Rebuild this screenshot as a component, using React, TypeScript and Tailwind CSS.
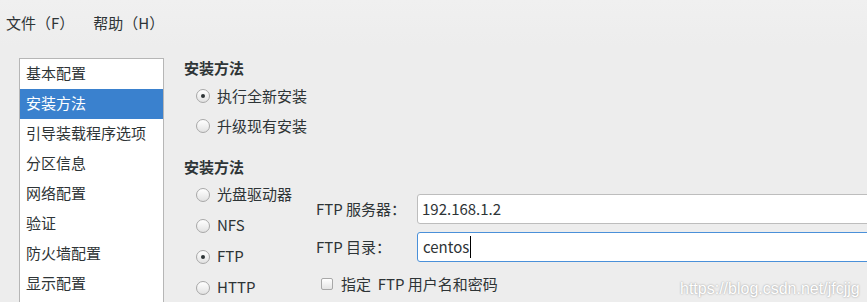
import React from "react";

const font = { fontFamily: '"Noto Sans CJK SC", "DejaVu Sans", sans-serif' };

const Radio: React.FC<{ checked?: boolean }> = ({ checked }) => (
  <span className="w-[14px] h-[14px] rounded-full border border-[#a8a8a8] bg-gradient-to-b from-white to-[#e2e2e2] flex items-center justify-center shrink-0">
    {checked && <span className="w-[4px] h-[4px] rounded-full bg-[#2e3436]" />}
  </span>
);

const RadioRow: React.FC<{ label: string; checked?: boolean; h: string }> = ({
  label,
  checked,
  h,
}) => (
  <div className={`flex items-center gap-[7px] pl-[12px] ${h}`}>
    <Radio checked={checked} />
    <span>{label}</span>
  </div>
);

const App: React.FC = () => {
  const pages = [
    "基本配置",
    "安装方法",
    "引导装载程序选项",
    "分区信息",
    "网络配置",
    "验证",
    "防火墙配置",
    "显示配置",
  ];

  return (
    <div
      className="relative w-[867px] h-[302px] overflow-hidden bg-[#ededed] text-[#2e3436] text-[15px]"
      style={font}
    >
      {/* Menu bar */}
      <div className="h-[46px] flex items-center gap-[19px] pl-[6px] bg-gradient-to-b from-[#f0f0f0] to-[#ededed]">
        <span>文件（F）</span>
        <span>帮助（H）</span>
      </div>

      {/* Body */}
      <div className="flex mt-[12px]">
        {/* Page list */}
        <div className="ml-[19px] w-[145px] h-[260px] border border-[#b6b6b6] bg-white shrink-0">
          {pages.map((p, i) => (
            <div
              key={p}
              className={`h-[30px] flex items-center pl-[6px] pb-px ${
                i === 1 ? "bg-[#3a81ce] text-white" : ""
              }`}
            >
              {p}
            </div>
          ))}
        </div>

        {/* Content */}
        <div className="ml-[20px] flex-1 min-w-0">
          <div className="h-[20px] flex items-center font-bold">安装方法</div>
          <div className="mt-[3px]">
            <RadioRow label="执行全新安装" checked h="h-[30px]" />
            <RadioRow label="升级现有安装" h="h-[30px]" />
          </div>

          <div className="mt-[16px] h-[20px] flex items-center font-bold">安装方法</div>

          <div className="flex mt-[2px]">
            <div className="w-[132px] shrink-0">
              <RadioRow label="光盘驱动器" h="h-[31px]" />
              <RadioRow label="NFS" h="h-[31px]" />
              <RadioRow label="FTP" checked h="h-[31px]" />
              <RadioRow label="HTTP" h="h-[31px]" />
            </div>

            <div className="flex-1 min-w-0 pt-[15px]">
              <div className="grid grid-cols-[101px_1fr] gap-y-[8px] items-center">
                <span>FTP 服务器：</span>
                <div className="h-[30px] -mr-[4px] flex items-center pl-[4px] bg-white border border-[#bdbdbd] rounded-[3px]">
                  192.168.1.2
                </div>
                <span>FTP 目录：</span>
                <div className="h-[30px] -mr-[4px] flex items-center pl-[5px] bg-white border border-[#4a90d9] rounded-[3px]">
                  <span className="border-r border-black pr-px">centos</span>
                </div>
              </div>
              <div className="mt-[11px] flex items-center gap-[8px] pl-[5px]">
                <span className="w-[12px] h-[12px] border border-[#a8a8a8] rounded-[2px] bg-gradient-to-b from-white to-[#e4e4e4]" />
                <span>指定&nbsp;&nbsp;FTP 用户名和密码</span>
              </div>
            </div>
          </div>
        </div>
      </div>

      {/* Watermark */}
      <div
        className="absolute left-[680px] top-[277px] text-[16px] text-white [text-shadow:0_0_2px_#8f8f8f]"
        style={{ fontFamily: '"Liberation Sans", Arial, sans-serif' }}
      >
        https://blog.csdn.net/jfcjjg
      </div>
    </div>
  );
};

export default App;
